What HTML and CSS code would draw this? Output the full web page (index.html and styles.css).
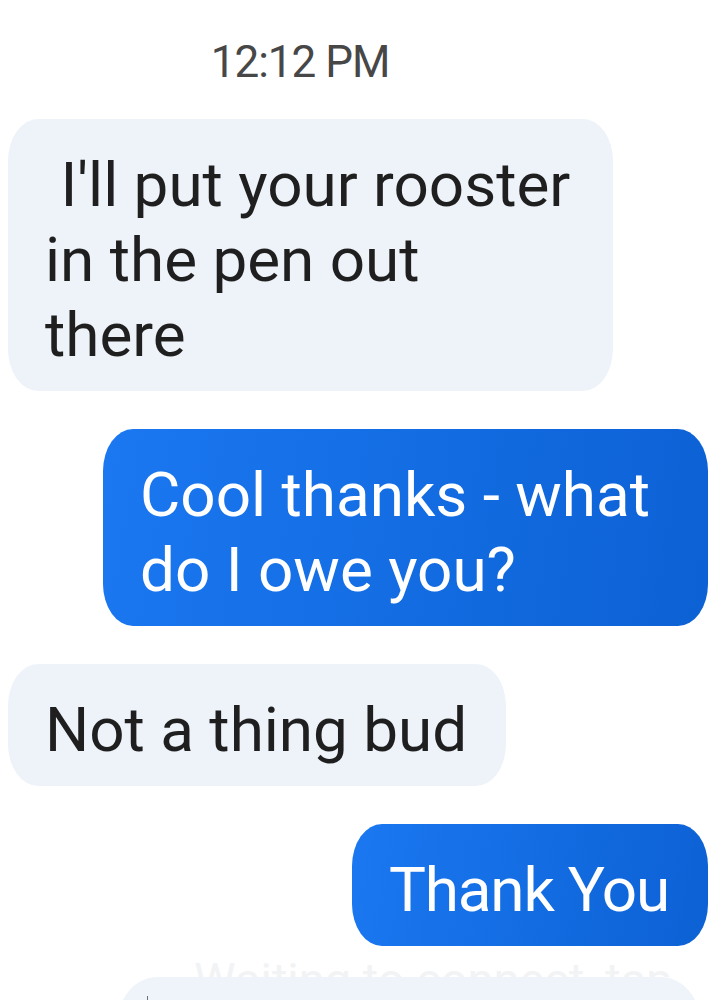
FILE: index.html
```html
<!DOCTYPE html>
<html lang="en">
<head>
    <meta charset="UTF-8">
    <meta name="viewport" content="width=device-width, initial-scale=1.0">
    <title>Messages</title>
    <link rel="stylesheet" href="styles.css">
</head>
<body>
    <div class="thread">
        <div class="timestamp">12:12 PM</div>

        <div class="bubble incoming"> I'll put your rooster in the pen out there</div>
        <div class="bubble outgoing">Cool thanks - what do I owe you?</div>
        <div class="bubble incoming">Not a thing bud</div>
        <div class="bubble outgoing tight">Thank You</div>

        <div class="status"><span>Waiting to connect, tap</span></div>

        <div class="compose">
            <span class="cursor"></span>
        </div>
    </div>
</body>
</html>
```

FILE: styles.css
```css
* { box-sizing: border-box; margin: 0; padding: 0; }
body { font-family: Roboto, "Noto Sans", sans-serif; background: #fff; height: 1000px; overflow: hidden; }

.thread {
    display: flex;
    flex-direction: column;
    gap: 38px;
}

.timestamp {
    width: 600px;
    padding-top: 36px;
    margin-bottom: -7px;
    text-align: center;
    font-size: 44px;
    line-height: 52px;
    letter-spacing: -1px;
    color: #474747;
}

.bubble {
    max-width: 605px;
    padding: 28px 39px 19px 37px;
    font-size: 62px;
    line-height: 75px;
    white-space: pre-wrap;
    border-radius: 30px / 42px;
}

.incoming {
    align-self: flex-start;
    margin-left: 8px;
    background: #eef3fa;
    color: #1f1f1f;
}

.outgoing {
    align-self: flex-end;
    margin-right: 19px;
    background: linear-gradient(100deg, #1b78f1 0%, #0c61d4 100%);
    color: #fff;
}

.tight { letter-spacing: -1.2px; }

.status {
    height: 25px;
    margin-top: -32px;
    overflow: hidden;
    padding-left: 194px;
    font-size: 47px;
    line-height: 56px;
    color: #f2f3f5;
}

.status span { display: block; }

.compose {
    margin: -38px 27px 0 118px;
    height: 90px;
    padding: 19px 0 0 29px;
    background: #eff3fa;
    border-radius: 52px / 60px;
}

.cursor {
    display: block;
    width: 1px;
    height: 40px;
    background: #6f6f6f;
}
```
